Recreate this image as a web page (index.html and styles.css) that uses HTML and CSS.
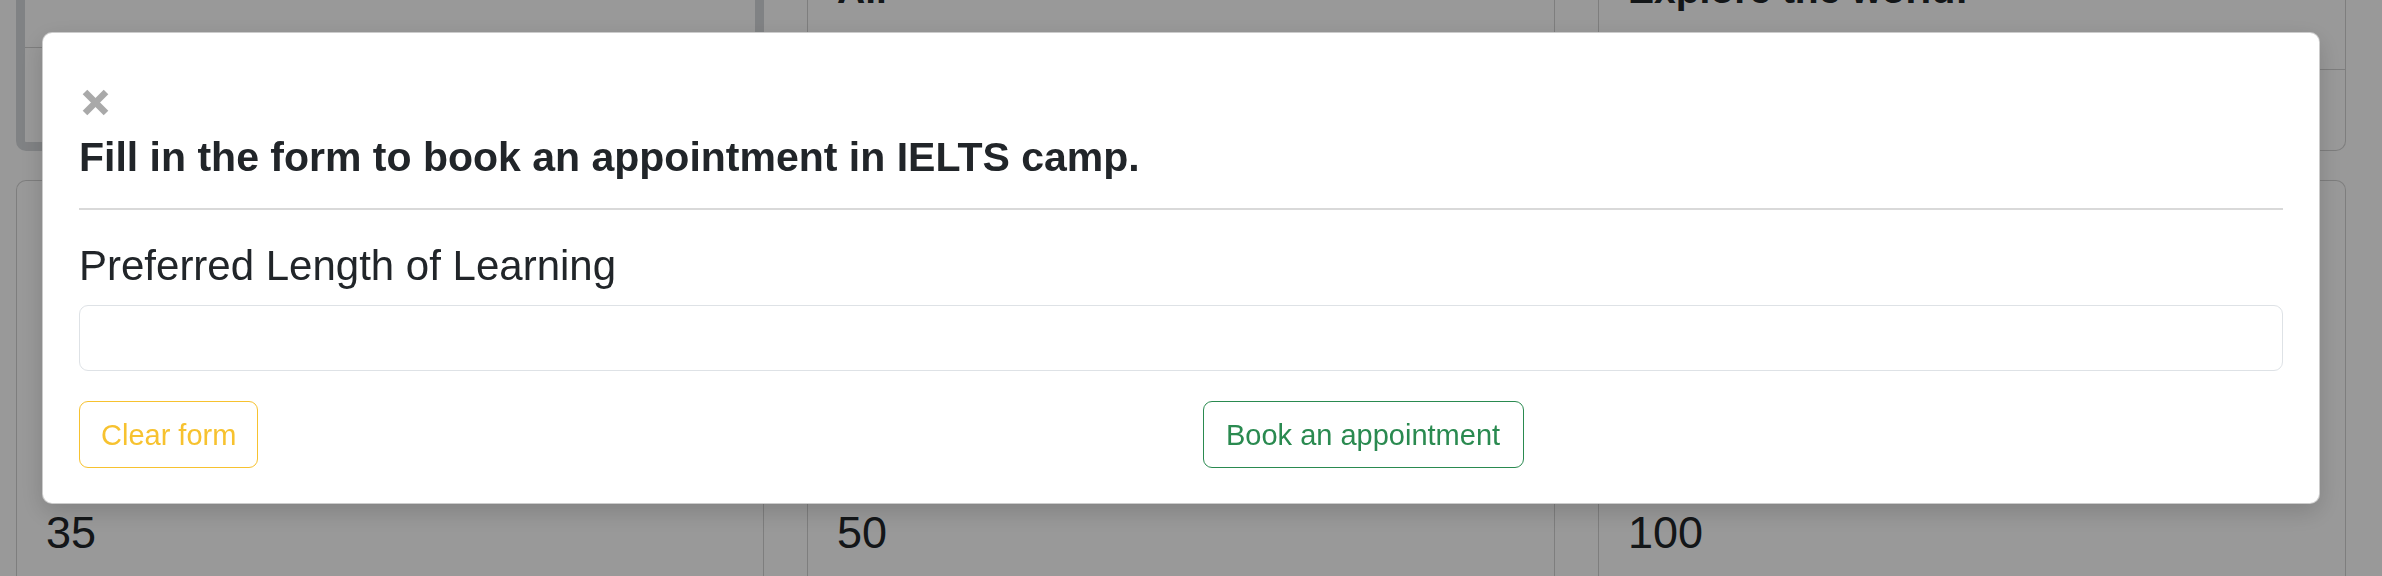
FILE: index.html
```html
<!DOCTYPE html>
<html lang="en">
<head>
<meta charset="utf-8">
<title>IELTS camp</title>
<link rel="stylesheet" href="styles.css">
</head>
<body>
<div class="page">
  <div class="cards">
    <div class="card card-top card-active">
      <div class="card-body card-body-active"></div>
      <div class="card-footer"></div>
    </div>
    <div class="card card-top">
      <div class="card-body"><h5 class="card-title">All</h5></div>
      <div class="card-footer"></div>
    </div>
    <div class="card card-top">
      <div class="card-body"><h5 class="card-title">Explore the world!</h5></div>
      <div class="card-footer"></div>
    </div>
    <div class="card card-bottom">
      <div class="card-body card-body-price"><p class="price">35</p></div>
    </div>
    <div class="card card-bottom">
      <div class="card-body card-body-price"><p class="price">50</p></div>
    </div>
    <div class="card card-bottom">
      <div class="card-body card-body-price"><p class="price">100</p></div>
    </div>
  </div>
</div>

<div class="backdrop"></div>

<div class="modal" role="dialog" aria-modal="true">
  <button class="close" type="button" aria-label="Close">
    <svg width="27" height="27" viewBox="0 0 27 27" aria-hidden="true">
      <line x1="3" y1="3" x2="24" y2="24" />
      <line x1="24" y1="3" x2="3" y2="24" />
    </svg>
  </button>
  <h4 class="modal-title">Fill in the form to book an appointment in IELTS camp.</h4>
  <hr class="divider">
  <label class="field-label" for="length">Preferred Length of Learning</label>
  <input class="field-input" id="length" type="text">
  <div class="actions">
    <button class="btn btn-warning" type="button">Clear form</button>
    <button class="btn btn-success" type="button">Book an appointment</button>
  </div>
</div>
</body>
</html>
```

FILE: styles.css
```css
* {
  box-sizing: border-box;
}

html, body {
  margin: 0;
  padding: 0;
}

body {
  width: 2382px;
  height: 576px;
  overflow: hidden;
  background: #ffffff;
  font-family: "Liberation Sans", Arial, sans-serif;
  color: #212529;
}

.page {
  padding: 0 35px 0 16px;
}

.cards {
  display: grid;
  grid-template-columns: repeat(3, 748px);
  column-gap: 43px;
  row-gap: 29px;
  margin-top: -100px;
}

.card {
  display: flex;
  flex-direction: column;
  background: #ffffff;
  border: 1px solid rgba(0, 0, 0, 0.175);
  border-radius: 10px;
}

.card-top {
  height: 251px;
}

.card-bottom {
  height: 460px;
}

.card-active {
  border: 9px solid #d6d9dc;
}

.card-body {
  height: 168px;
  padding: 66px 29px 0;
}

.card-body-active {
  height: 138px;
}

.card-body-price {
  height: auto;
  padding: 326px 29px 0;
}

.card-footer {
  flex: 1;
  border-top: 1px solid rgba(0, 0, 0, 0.175);
}

.card-title {
  margin: 0;
  font-size: 39px;
  line-height: 46px;
  font-weight: 700;
  color: #212529;
}

.price {
  margin: 0;
  font-size: 45px;
  line-height: 52px;
  color: #212529;
}

.backdrop {
  position: fixed;
  inset: 0;
  background: rgba(0, 0, 0, 0.4);
}

.modal {
  position: fixed;
  top: 32px;
  left: 42px;
  width: 2278px;
  background: #ffffff;
  border: 1px solid rgba(0, 0, 0, 0.2);
  border-radius: 10px;
  padding: 56px 36px 35px;
  box-shadow: 0 8px 24px rgba(0, 0, 0, 0.16);
}

.close {
  display: block;
  width: 27px;
  height: 27px;
  margin: 0 0 16px 3px;
  padding: 0;
  border: 0;
  background: transparent;
}

.close svg {
  display: block;
}

.close line {
  stroke: #a9a9a9;
  stroke-width: 6.5;
  stroke-linecap: butt;
}

.modal-title {
  margin: 0;
  font-size: 41px;
  line-height: 50px;
  font-weight: 700;
  color: #212529;
}

.divider {
  margin: 26px 0 0;
  border: 0;
  border-top: 2px solid #d9d9d9;
  height: 0;
}

.field-label {
  display: block;
  margin-top: 31px;
  font-size: 42px;
  line-height: 50px;
  color: #212529;
}

.field-input {
  display: block;
  width: 100%;
  height: 66px;
  margin-top: 14px;
  border: 1px solid #dee2e6;
  border-radius: 9px;
  background: #ffffff;
  font-family: inherit;
  font-size: 29px;
  padding: 0 18px;
}

.actions {
  display: grid;
  grid-template-columns: 1fr 1fr;
  column-gap: 44px;
  margin-top: 30px;
  justify-items: start;
}

.btn {
  font-family: "Liberation Sans", Arial, sans-serif;
  font-size: 29px;
  line-height: 35px;
  padding: 16px 21px 14px;
  border: 1px solid;
  border-radius: 9px;
  background: transparent;
}

.btn-success {
  padding-left: 22px;
  padding-right: 23px;
}

.btn-warning {
  color: #f7c22f;
  border-color: #f7c22f;
}

.btn-success {
  color: #2a8a50;
  border-color: #2a8a50;
}
```
